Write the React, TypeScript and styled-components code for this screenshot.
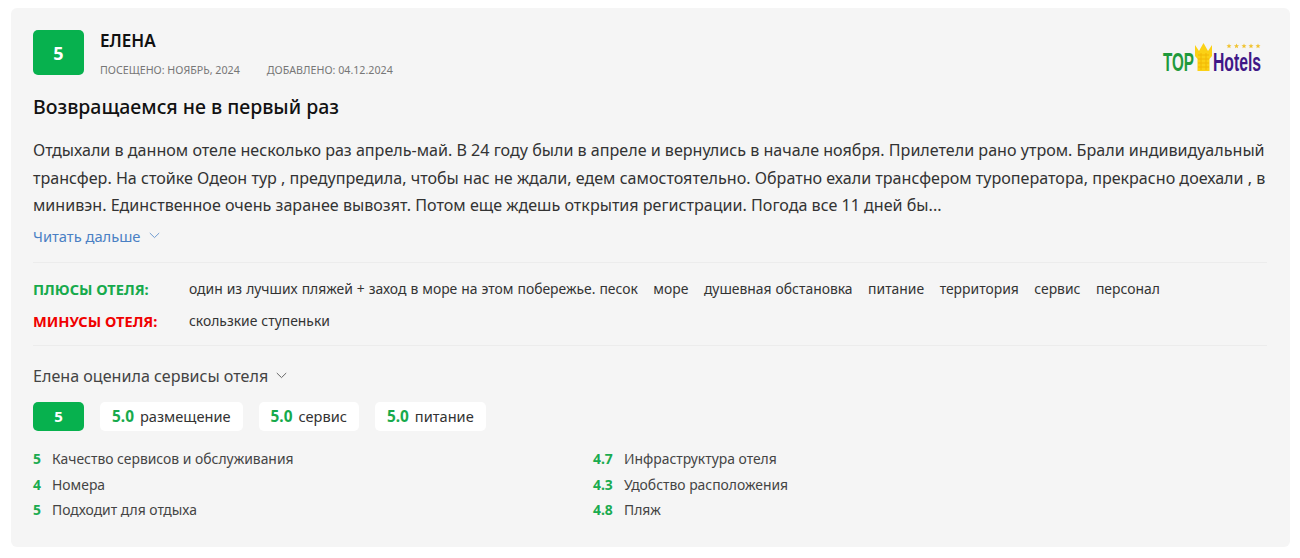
import styled, { createGlobalStyle } from "styled-components";

const pros = [
  "один из лучших пляжей + заход в море на этом побережье. песок",
  "море",
  "душевная обстановка",
  "питание",
  "территория",
  "сервис",
  "персонал",
];

const chips = [
  { value: "5.0", label: "размещение" },
  { value: "5.0", label: "сервис" },
  { value: "5.0", label: "питание" },
];

const leftScores = [
  { value: "5", label: "Качество сервисов и обслуживания" },
  { value: "4", label: "Номера" },
  { value: "5", label: "Подходит для отдыха" },
];

const rightScores = [
  { value: "4.7", label: "Инфраструктура отеля" },
  { value: "4.3", label: "Удобство расположения" },
  { value: "4.8", label: "Пляж" },
];

const starCenters = [66, 73.5, 81, 88, 95];

const Chevron = ({ color }: { color: string }) => (
  <svg width="11" height="7" viewBox="0 0 11 7" fill="none">
    <path d="M0.8 1L5.5 5.6L10.2 1" stroke={color} strokeWidth="1" />
  </svg>
);

const Logo = () => (
  <LogoSvg width="100" height="34" viewBox="0 0 100 34">
    <text x="0" y="29" fontFamily="Liberation Sans, sans-serif" fontSize="26" fontWeight="700" fill="#1f9a3c" textLength="31" lengthAdjust="spacingAndGlyphs">
      TOP
    </text>
    <path d="M32 3L36 9L40.500 1L45 9L49 3V14L46.500 17V29H34.500V17L32 14Z" fill="#fbd115" />
    <path d="M35 13H46M35 17H46M35 21H46M35 25H46M38 11V28M43 11V28" stroke="#f2b705" strokeWidth="1" />
    <text x="50" y="29" fontFamily="Liberation Sans, sans-serif" fontSize="26" fontWeight="700" fill="#3f1787" textLength="48" lengthAdjust="spacingAndGlyphs">
      Hotels
    </text>
    {starCenters.map((x) => (
      <path
        key={x}
        transform={`translate(${x} 4)`}
        d="M0 -2.600L0.700 -0.800L2.500 -0.800L1.100 0.400L1.600 2.200L0 1.200L-1.600 2.200L-1.100 0.400L-2.500 -0.800L-0.700 -0.800Z"
        fill="#f0c22e"
      />
    ))}
  </LogoSvg>
);

export default function App() {
  return (
    <>
      <GlobalStyle />
      <Card>
        <Header>
          <MainBadge>5</MainBadge>
          <Author>
            <Name>ЕЛЕНА</Name>
            <Dates>
              <span>ПОСЕЩЕНО: НОЯБРЬ, 2024</span>
              <span>ДОБАВЛЕНО: 04.12.2024</span>
            </Dates>
          </Author>
          <LogoWrap>
            <Logo />
          </LogoWrap>
        </Header>

        <Title>Возвращаемся не в первый раз</Title>
        <Body>
          Отдыхали в данном отеле несколько раз апрель-май. В 24 году были в апреле и вернулись в начале ноября. Прилетели рано утром. Брали индивидуальный трансфер. На стойке Одеон тур , предупредила, чтобы нас не ждали, едем самостоятельно. Обратно ехали трансфером туроператора, прекрасно доехали , в минивэн. Единственное очень заранее вывозят. Потом еще ждешь открытия регистрации. Погода все 11 дней бы...
        </Body>
        <ReadMore>
          Читать дальше
          <Chevron color="#6f9bd0" />
        </ReadMore>

        <Divider />

        <TagRow>
          <TagLabel $color="#17aa4c">ПЛЮСЫ ОТЕЛЯ:</TagLabel>
          <Tags>
            {pros.map((p) => (
              <span key={p}>{p}</span>
            ))}
          </Tags>
        </TagRow>
        <TagRow $minus>
          <TagLabel $color="#f00000">МИНУСЫ ОТЕЛЯ:</TagLabel>
          <Tags>
            <span>скользкие ступеньки</span>
          </Tags>
        </TagRow>

        <Divider $minus />

        <ServicesToggle>
          Елена оценила сервисы отеля
          <Chevron color="#666" />
        </ServicesToggle>

        <ChipRow>
          <ChipBadge>5</ChipBadge>
          {chips.map((c) => (
            <Chip key={c.label}>
              <b>{c.value}</b> {c.label}
            </Chip>
          ))}
        </ChipRow>

        <ScoreGrid>
          <ScoreColumn>
            {leftScores.map((s) => (
              <ScoreRow key={s.label}>
                <ScoreValue $width={19}>{s.value}</ScoreValue>
                {s.label}
              </ScoreRow>
            ))}
          </ScoreColumn>
          <ScoreColumn>
            {rightScores.map((s) => (
              <ScoreRow key={s.label}>
                <ScoreValue $width={31}>{s.value}</ScoreValue>
                {s.label}
              </ScoreRow>
            ))}
          </ScoreColumn>
        </ScoreGrid>
      </Card>
    </>
  );
}

const GlobalStyle = createGlobalStyle`
  html, body {
    margin: 0;
    background: #fff;
    font-family: "Noto Sans", "Open Sans", sans-serif;
    color: #222;
  }
`;

const Card = styled.div`
  box-sizing: border-box;
  width: 1279px;
  height: 539px;
  margin: 8px 0 0 11px;
  padding: 22px 23px 0 22px;
  background: #f5f5f5;
  border-radius: 6px;
`;

const Header = styled.div`
  display: flex;
  align-items: flex-start;
  gap: 16px;
`;

const MainBadge = styled.div`
  width: 51px;
  height: 45px;
  display: flex;
  align-items: center;
  justify-content: center;
  background: #07b14e;
  border-radius: 5px;
  color: #fff;
  font-size: 18px;
  font-weight: 700;
`;

const Author = styled.div`
  flex: 1;
  display: flex;
  flex-direction: column;
`;

const Name = styled.div`
  font-size: 17px;
  font-weight: 600;
  line-height: 22px;
  color: #111;
`;

const Dates = styled.div`
  display: flex;
  gap: 27px;
  margin-top: 11px;
  font-size: 10.700px;
  line-height: 15px;
  color: #777;
`;

const LogoWrap = styled.div`
  margin: 12px 4px 0 0;
`;

const LogoSvg = styled.svg`
  display: block;
  overflow: visible;
`;

const Title = styled.h2`
  margin: 16px 0 0;
  font-size: 19.500px;
  font-weight: 500;
  line-height: 26px;
  color: #111;
`;

const Body = styled.p`
  margin: 17px 0 0;
  font-size: 16.100px;
  line-height: 27.500px;
  color: #333;
`;

const ReadMore = styled.div`
  display: flex;
  align-items: center;
  gap: 9px;
  margin-top: 6px;
  font-size: 14.700px;
  line-height: 20px;
  color: #4a80c4;
`;

const Divider = styled.div<{ $minus?: boolean }>`
  height: 1px;
  background: #ececec;
  margin-top: ${(p) => (p.$minus ? "14px" : "16px")};
`;

const TagRow = styled.div<{ $minus?: boolean }>`
  display: flex;
  align-items: center;
  margin-top: ${(p) => (p.$minus ? "12px" : "16px")};
  height: 20px;
`;

const TagLabel = styled.div<{ $color: string }>`
  width: 156px;
  font-size: 14.600px;
  font-weight: 700;
  color: ${(p) => p.$color};
`;

const Tags = styled.div`
  display: flex;
  gap: 15.500px;
  font-size: 13.900px;
  word-spacing: 0.400px;
  color: #333;
`;

const ServicesToggle = styled.div`
  display: flex;
  align-items: center;
  gap: 8px;
  margin-top: 20px;
  font-size: 16.100px;
  line-height: 20px;
  color: #444;
`;

const ChipRow = styled.div`
  display: flex;
  gap: 16px;
  margin-top: 16px;
`;

const ChipBadge = styled.div`
  width: 51px;
  height: 29px;
  display: flex;
  align-items: center;
  justify-content: center;
  background: #07b14e;
  border-radius: 5px;
  color: #fff;
  font-size: 15px;
  font-weight: 700;
`;

const Chip = styled.div`
  display: flex;
  align-items: center;
  gap: 6px;
  height: 29px;
  padding: 0 12px;
  background: #fff;
  border-radius: 5px;
  font-size: 14.600px;
  color: #333;

  b {
    font-size: 15.400px;
    font-weight: 700;
    color: #17aa4c;
  }
`;

const ScoreGrid = styled.div`
  display: flex;
  margin-top: 19px;
`;

const ScoreColumn = styled.div`
  width: 560px;
  display: flex;
  flex-direction: column;
  gap: 7.500px;
`;

const ScoreRow = styled.div`
  display: flex;
  align-items: center;
  height: 18px;
  font-size: 13.900px;
  color: #444;
`;

const ScoreValue = styled.span<{ $width: number }>`
  width: ${(p) => p.$width}px;
  font-weight: 700;
  color: #1bab50;
`;
